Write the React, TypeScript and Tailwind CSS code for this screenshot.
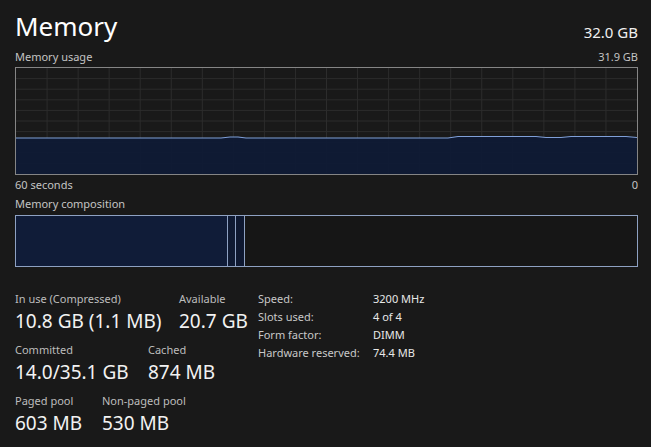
import React from 'react';

const font = { fontFamily: '"Segoe UI", "Noto Sans", "Open Sans", sans-serif' };

// usage line: y positions (0..106) along the width, small bumps like the reference
const UsageGraph = () => {
  const w = 621;
  const h = 106;
  const cols = 20;
  const rows = 10;
  const pts: [number, number][] = [
    [0, 70], [205, 70], [214, 69], [222, 69], [230, 70], [432, 70], [442, 68.5],
    [520, 68.5], [530, 69.5], [545, 69.5], [555, 68.5], [610, 68.5], [621, 69.5],
  ];
  const line = pts.map(([x, y], i) => `${i ? 'L' : 'M'}${x} ${y}`).join(' ');
  const area = `${line} L${w} ${h} L0 ${h} Z`;
  return (
    <svg width={w} height={h} className="block">
      {Array.from({ length: cols - 1 }, (_, i) => (
        <line key={`v${i}`} x1={((i + 1) * w) / cols} y1={0} x2={((i + 1) * w) / cols} y2={h} stroke="#2c2c2c" strokeWidth={1} />
      ))}
      {Array.from({ length: rows - 1 }, (_, i) => (
        <line key={`h${i}`} x1={0} y1={((i + 1) * h) / rows} x2={w} y2={((i + 1) * h) / rows} stroke="#2c2c2c" strokeWidth={1} />
      ))}
      <path d={area} fill="#0f1a35" fillOpacity={0.95} />
      <path d={line} fill="none" stroke="#7f9fd8" strokeWidth={1.2} />
    </svg>
  );
};

const Stat = ({ label, value, className = '' }: { label: string; value: string; className?: string }) => (
  <div className={`flex flex-col ${className}`}>
    <span className="text-[11px] leading-[14px] text-[#bdbdbd]">{label}</span>
    <span className="text-[19px] leading-[26px] text-[#f2f2f2] mt-[2px]">{value}</span>
  </div>
);

const specs = [
  ['Speed:', '3200 MHz'],
  ['Slots used:', '4 of 4'],
  ['Form factor:', 'DIMM'],
  ['Hardware reserved:', '74.4 MB'],
];

export default function App() {
  return (
    <div className="w-[651px] h-[447px] bg-[#191919] text-white overflow-hidden" style={font}>
      <div className="pl-[15px] pr-[13px] flex flex-col">
        <div className="flex items-end justify-between h-[48px]">
          <span className="text-[26px] leading-[32px] mb-[6px] text-white">Memory</span>
          <span className="text-[15px] leading-[20px] mb-[6px] text-[#f0f0f0]">32.0 GB</span>
        </div>
        <div className="flex justify-between text-[11px] leading-[18px] text-[#c4c4c4]">
          <span>Memory usage</span>
          <span>31.9 GB</span>
        </div>
        <div className="mt-[1px] border border-[#858585] w-[623px] h-[108px]">
          <UsageGraph />
        </div>
        <div className="flex justify-between text-[11px] leading-[18px] text-[#c4c4c4] mt-[1px]">
          <span>60 seconds</span>
          <span>0</span>
        </div>
        <div className="text-[11px] leading-[18px] text-[#c4c4c4] mt-[1px]">Memory composition</div>
        <div className="mt-[2px] border border-[#8ea1c2] h-[52px] w-[623px] flex">
          <div className="w-[212px] bg-[#101c38] border-r border-[#8ea1c2]" />
          <div className="w-[8px] bg-[#0f1a33] border-r border-[#8ea1c2]" />
          <div className="w-[9px] bg-[#0e1830] border-r border-[#8ea1c2]" />
          <div className="flex-1 bg-[#161616]" />
        </div>

        <div className="flex mt-[25px]">
          <div className="flex flex-col gap-[9px] w-[243px]">
            <div className="flex">
              <Stat label="In use (Compressed)" value="10.8 GB (1.1 MB)" className="w-[164px]" />
              <Stat label="Available" value="20.7 GB" />
            </div>
            <div className="flex">
              <Stat label="Committed" value="14.0/35.1 GB" className="w-[133px]" />
              <Stat label="Cached" value="874 MB" />
            </div>
            <div className="flex">
              <Stat label="Paged pool" value="603 MB" className="w-[87px]" />
              <Stat label="Non-paged pool" value="530 MB" />
            </div>
          </div>
          <div className="flex flex-col text-[11px] leading-[18px] text-[#c8c8c8] -mt-[2px]">
            {specs.map(([k, v]) => (
              <div key={k} className="flex">
                <span className="w-[115px]">{k}</span>
                <span className="text-[#e8e8e8]">{v}</span>
              </div>
            ))}
          </div>
        </div>
      </div>
    </div>
  );
}
